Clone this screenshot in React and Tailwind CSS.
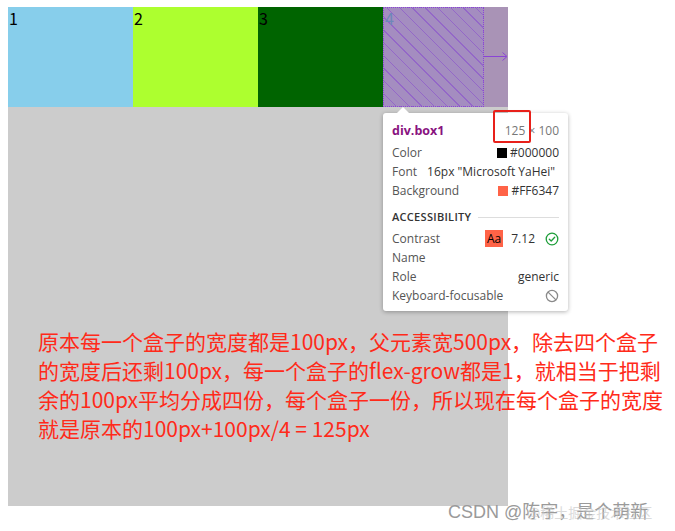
import React from "react";

const hatch = {
  backgroundImage:
    "repeating-linear-gradient(45deg, transparent 0px, transparent 8px, rgba(128,60,210,0.45) 8px, rgba(128,60,210,0.45) 9px)",
};

function CheckCircle() {
  return (
    <svg width="14" height="14" viewBox="0 0 14 14" fill="none">
      <circle cx="7" cy="7" r="5.8" stroke="#1e9e3a" strokeWidth="1.3" />
      <path d="M4.3 7.2 L6.2 9 L9.7 5.2" stroke="#1e9e3a" strokeWidth="1.3" strokeLinecap="round" strokeLinejoin="round" />
    </svg>
  );
}

function NoEntry() {
  return (
    <svg width="14" height="14" viewBox="0 0 14 14" fill="none">
      <circle cx="7" cy="7" r="5.6" stroke="#8a8a8a" strokeWidth="1.3" />
      <path d="M3.1 3.1 L10.9 10.9" stroke="#8a8a8a" strokeWidth="1.3" />
    </svg>
  );
}

function Row({ label, children }) {
  return (
    <div className="flex items-center justify-between h-[19px]">
      <span className="text-[#555]">{label}</span>
      <span className="flex items-center text-[#333]">{children}</span>
    </div>
  );
}

export default function App() {
  return (
    <div className="bg-white w-[675px] h-[531px] pt-[7px] pl-[8px] relative overflow-hidden" style={{ fontFamily: '"Noto Sans CJK SC", "Noto Sans", sans-serif' }}>
      <div className="w-[500px] h-[499px] bg-[#cccccc] relative flex flex-col">
        <div className="flex h-[100px]">
          <div className="w-[125px] bg-[#87ceeb] text-black text-[16px] leading-[22px] pl-px">1</div>
          <div className="w-[125px] bg-[#adff2f] text-black text-[16px] leading-[22px] pl-px">2</div>
          <div className="w-[125px] bg-[#006400] text-black text-[16px] leading-[22px] pl-px">3</div>
          <div className="w-[125px] flex bg-[#a993b6]">
            <div className="w-[101px] h-full bg-[#a48dc0] border border-dotted border-[#8a44d6] text-[#6d88b8] text-[16px] leading-[20px] pl-px" style={hatch}>4</div>
            <div className="flex-1 relative">
              <div className="absolute left-0 right-[2px] top-[49px] h-px bg-[#8a44d6]"></div>
              <svg className="absolute right-0 top-[45px]" width="6" height="9" viewBox="0 0 6 9" fill="none">
                <path d="M0.5 0.5 L5 4.5 L0.5 8.5" stroke="#8a44d6" strokeWidth="1" />
              </svg>
            </div>
          </div>
        </div>

        <div className="mt-[220px] pl-[30px] text-[21px] leading-[29px] text-[#ff2a1a] whitespace-nowrap">
          <div>原本每一个盒子的宽度都是100px，父元素宽500px，除去四个盒子</div>
          <div>的宽度后还剩100px，每一个盒子的flex-grow都是1，就相当于把剩</div>
          <div>余的100px平均分成四份，每个盒子一份，所以现在每个盒子的宽度</div>
          <div>就是原本的100px+100px/4 = 125px</div>
        </div>

        {/* tooltip */}
        <div className="absolute left-[375px] top-[106px] w-[185px] rounded-[3px] bg-white shadow-[0_1px_4px_rgba(0,0,0,0.3)] px-[9px] pt-[9px] pb-[6px] text-[12px]" style={{ fontFamily: '"Open Sans", "Noto Sans", sans-serif' }}>
          <div className="absolute -top-[6px] left-[13px] w-0 h-0 border-l-[7px] border-r-[7px] border-b-[7px] border-l-transparent border-r-transparent border-b-white"></div>
          <div className="flex items-center justify-between h-[18px]">
            <span className="font-bold text-[#881280] text-[12.5px]">div.box1</span>
            <span className="text-[#777]">125 × 100</span>
          </div>
          <div className="mt-[3px]">
            <Row label="Color">
              <span className="inline-block w-[10px] h-[10px] bg-black mr-[3px]"></span>#000000
            </Row>
            <div className="flex items-center h-[19px] text-[#555]">
              <span className="mr-[10px]">Font</span>
              <span className="text-[#333]">16px "Microsoft YaHei"</span>
            </div>
            <Row label="Background">
              <span className="inline-block w-[10px] h-[10px] bg-[#ff6347] mr-[3px]"></span>#FF6347
            </Row>
          </div>
          <div className="flex items-center mt-[8px] h-[19px]">
            <span className="text-[11px] tracking-[0.3px] text-[#333] font-semibold">ACCESSIBILITY</span>
            <div className="flex-1 h-px bg-[#ddd] ml-[7px]"></div>
          </div>
          <div className="mt-[2px]">
            <Row label="Contrast">
              <span className="bg-[#ff6347] text-black px-[2px] h-[17px] leading-[17px] mr-[8px]">Aa</span>
              <span className="mr-[10px]">7.12</span>
              <CheckCircle />
            </Row>
            <Row label="Name"></Row>
            <Row label="Role">generic</Row>
            <Row label="Keyboard-focusable">
              <NoEntry />
            </Row>
          </div>
        </div>

        {/* red highlight */}
        <div className="absolute left-[485px] top-[103px] w-[38px] h-[33px] border-2 border-[#e8201a] rounded-[2px]"></div>
      </div>

      {/* watermark */}
      <div className="absolute left-[448px] top-[500px] text-[18px] leading-[24px] text-[#9a9a9a] whitespace-nowrap" style={{ fontFamily: '"Liberation Sans", "Noto Sans CJK SC", sans-serif' }}>
        CSDN @陈宇，是个萌新
      </div>
      <div className="absolute left-[527px] top-[500px] text-[14px] leading-[24px] text-[#c4c4c4] opacity-60 whitespace-nowrap" style={{ fontFamily: '"Noto Sans CJK SC", sans-serif' }}>
        @稀土掘金技术社区
      </div>
    </div>
  );
}
